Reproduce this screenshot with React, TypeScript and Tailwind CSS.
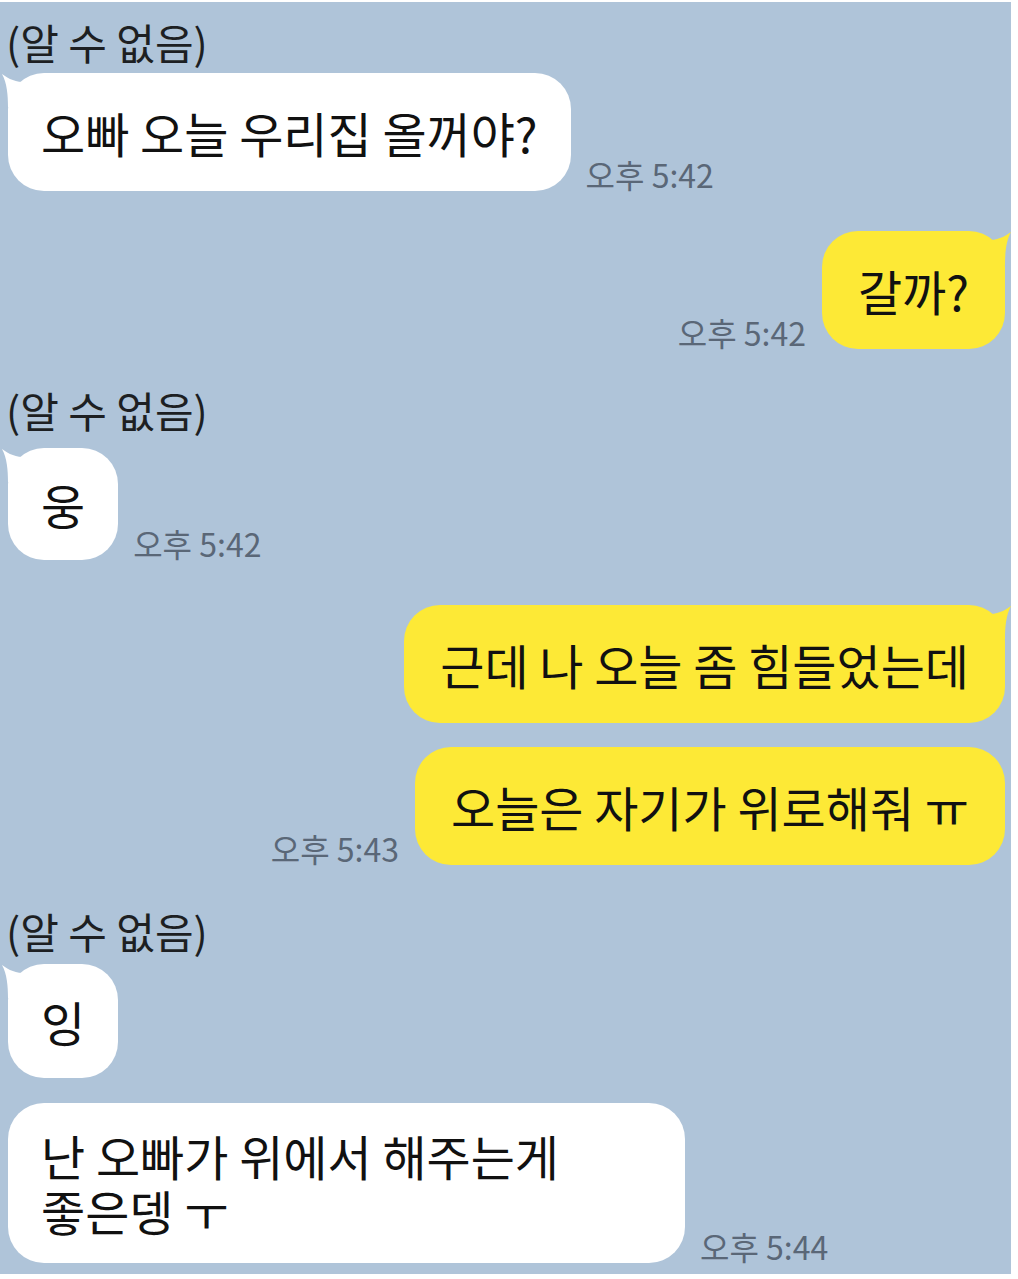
import React from 'react';

const FONT = { fontFamily: '"Noto Sans CJK KR", "Noto Sans", sans-serif' };

function Ear({ color, side }: { color: string; side: 'left' | 'right' }) {
  return (
    <svg
      viewBox="0 0 30 34"
      className={
        side === 'left'
          ? 'absolute left-[-7px] top-0 w-[30px] h-[34px]'
          : 'absolute right-[-7px] top-0 w-[30px] h-[34px] -scale-x-100'
      }
    >
      <path d="M1 1 C 9 7, 17 10, 30 9 L 30 34 L 7 34 C 7 22, 6 10, 1 1 Z" fill={color} />
    </svg>
  );
}

function Name({ className }: { className: string }) {
  return <div className={`pl-[6px] text-[42px] leading-[50px] text-[#1d1f22] ${className}`}>(알 수 없음)</div>;
}

function Time({ t, className = '' }: { t: string; className?: string }) {
  return <div className={`text-[32px] leading-[34px] text-[#5a6777] whitespace-nowrap ${className}`}>{t}</div>;
}

function Left({
  text,
  time,
  ear,
  className,
  bubble = 'py-[31px] leading-[56px]',
}: {
  text: React.ReactNode;
  time?: string;
  ear?: boolean;
  className: string;
  bubble?: string;
}) {
  return (
    <div className={`flex items-end gap-[15px] pl-[8px] ${className}`}>
      <div className={`relative bg-white rounded-[36px] px-[33px] text-[48px] text-[#111] ${bubble}`}>
        {ear && <Ear color="#ffffff" side="left" />}
        <span className="relative">{text}</span>
      </div>
      {time && <Time t={time} />}
    </div>
  );
}

function Right({ text, time, ear, className }: { text: string; time?: string; ear?: boolean; className: string }) {
  return (
    <div className={`flex items-end justify-end gap-[16px] pr-[6px] ${className}`}>
      {time && <Time t={time} />}
      <div className="relative bg-[#fde936] rounded-[36px] px-[36px] py-[31px] text-[48px] leading-[56px] text-[#111] whitespace-nowrap">
        {ear && <Ear color="#fde936" side="right" />}
        <span className="relative">{text}</span>
      </div>
    </div>
  );
}

export default function App() {
  return (
    <div className="w-[1018px] h-[1279px] bg-white overflow-hidden" style={FONT}>
      <div className="w-[1011px] h-[1272px] mt-[2px] bg-[#afc4d9] overflow-hidden flex flex-col">
        <Name className="mt-[15px]" />
        <Left className="mt-[6px]" ear text="오빠 오늘 우리집 올꺼야?" time="오후 5:42" />
        <Right className="mt-[40px]" ear text="갈까?" time="오후 5:42" />
        <Name className="mt-[36px]" />
        <Left className="mt-[13px]" bubble="py-[28px] leading-[56px]" ear text="웅" time="오후 5:42" />
        <Right className="mt-[45px]" ear text="근데 나 오늘 좀 힘들었는데" />
        <Right className="mt-[24px]" text="오늘은 자기가 위로해줘 ㅠ" time="오후 5:43" />
        <Name className="mt-[41px]" />
        <Left className="mt-[8px]" bubble="py-[29px] leading-[56px]" ear text="잉" />
        <Left
          className="mt-[25px]"
          bubble="w-[677px] py-[25px] leading-[55px]"
          text={
            <>
              난 오빠가 위에서 해주는게
              <br />
              좋은뎅 ㅜ
            </>
          }
          time="오후 5:44"
        />
      </div>
    </div>
  );
}
